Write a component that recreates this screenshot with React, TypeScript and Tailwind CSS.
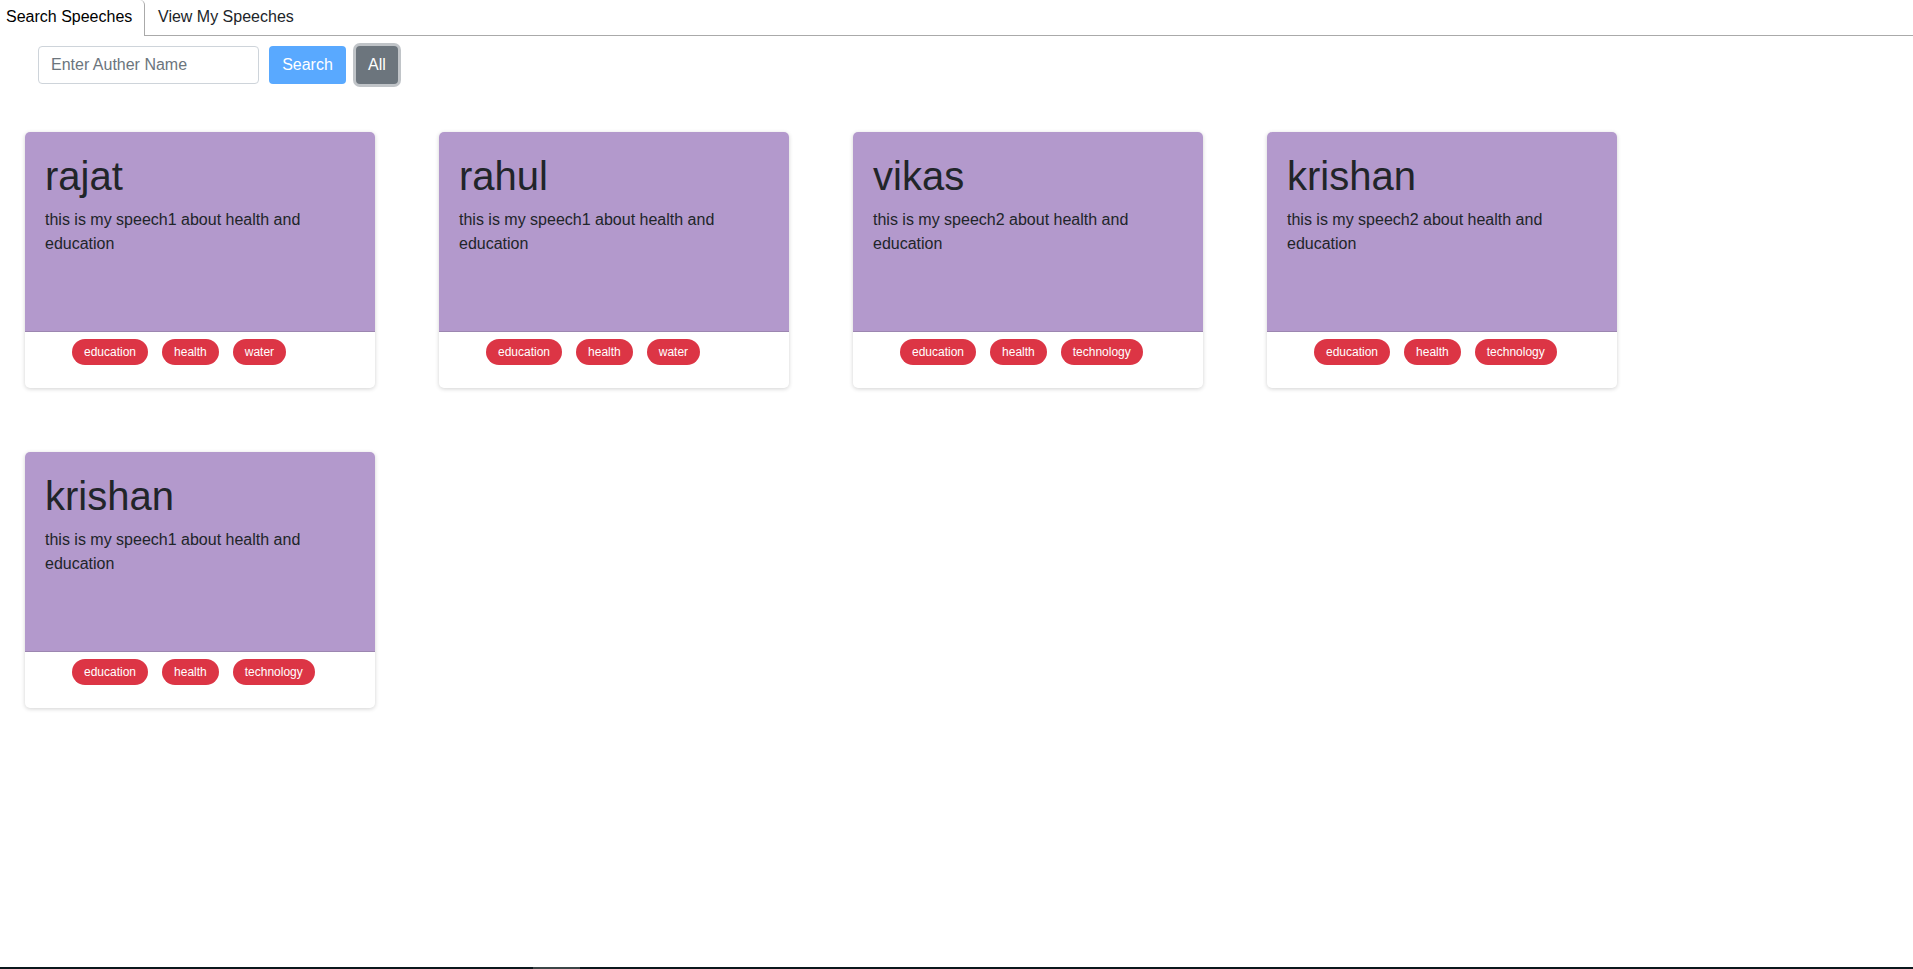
import React from "react";

type Speech = { author: string; text: string; tags: string[] };

const speeches: Speech[] = [
  { author: "rajat", text: "this is my speech1 about health and education", tags: ["education", "health", "water"] },
  { author: "rahul", text: "this is my speech1 about health and education", tags: ["education", "health", "water"] },
  { author: "vikas", text: "this is my speech2 about health and education", tags: ["education", "health", "technology"] },
  { author: "krishan", text: "this is my speech2 about health and education", tags: ["education", "health", "technology"] },
  { author: "krishan", text: "this is my speech1 about health and education", tags: ["education", "health", "technology"] },
];

function Card({ s }: { s: Speech }) {
  return (
    <div className="w-[350px] h-[256px] rounded-[5px] overflow-hidden bg-white shadow-[0_1px_4px_rgba(0,0,0,0.18)] flex flex-col">
      <div className="h-[200px] bg-[#b399cc] border-b border-[#9c86b0] px-5 pt-5 text-[#212529]">
        <h1 className="text-[40px] leading-[48px] mb-2 font-normal">{s.author}</h1>
        <p className="text-[16px] leading-6">{s.text}</p>
      </div>
      <div className="flex gap-[14px] pl-[47px] pt-[7px]">
        {s.tags.map((t, i) => (
          <span
            key={i}
            className="h-[26px] px-3 rounded-full bg-[#dc3545] text-white text-[12px] leading-[26px]"
          >
            {t}
          </span>
        ))}
      </div>
    </div>
  );
}

export default function App() {
  return (
    <div
      className="h-screen flex flex-col bg-white overflow-hidden"
      style={{ fontFamily: '"Liberation Sans", Arial, sans-serif' }}
    >
      <div className="flex h-[36px] text-[16px] text-[#000]">
        <div className="w-[145px] h-[36px] border-r border-[#aaa] rounded-tr-[5px] pl-[6px] pt-[5px] leading-6 bg-white">
          Search Speeches
        </div>
        <div className="flex-1 border-b border-[#aaa] pl-[13px] pt-[5px] leading-6 text-[#212529]">
          View My Speeches
        </div>
      </div>

      <div className="flex gap-[10px] pl-[38px] mt-[10px]">
        <input
          className="w-[221px] h-[38px] border border-[#ced4da] rounded-[4px] px-3 text-[16px] text-[#495057] placeholder:text-[#6c757d] outline-none"
          placeholder="Enter Auther Name"
        />
        <button className="w-[77px] h-[38px] rounded-[4px] bg-[#59a9ff] text-white text-[16px]">
          Search
        </button>
        <button className="w-[42px] h-[38px] rounded-[4px] bg-[#6c757d] text-white text-[16px] shadow-[0_0_0_3px_rgba(130,138,145,0.5)]">
          All
        </button>
      </div>

      <div className="flex flex-wrap gap-16 pl-[25px] mt-[48px] w-[1620px]">
        {speeches.map((s, i) => (
          <Card key={i} s={s} />
        ))}
      </div>

      <div className="mt-auto h-[2px] flex bg-[#0b181d]">
        <div className="w-[533px]" />
        <div className="w-[47px] bg-[#3b4647]" />
      </div>
    </div>
  );
}
